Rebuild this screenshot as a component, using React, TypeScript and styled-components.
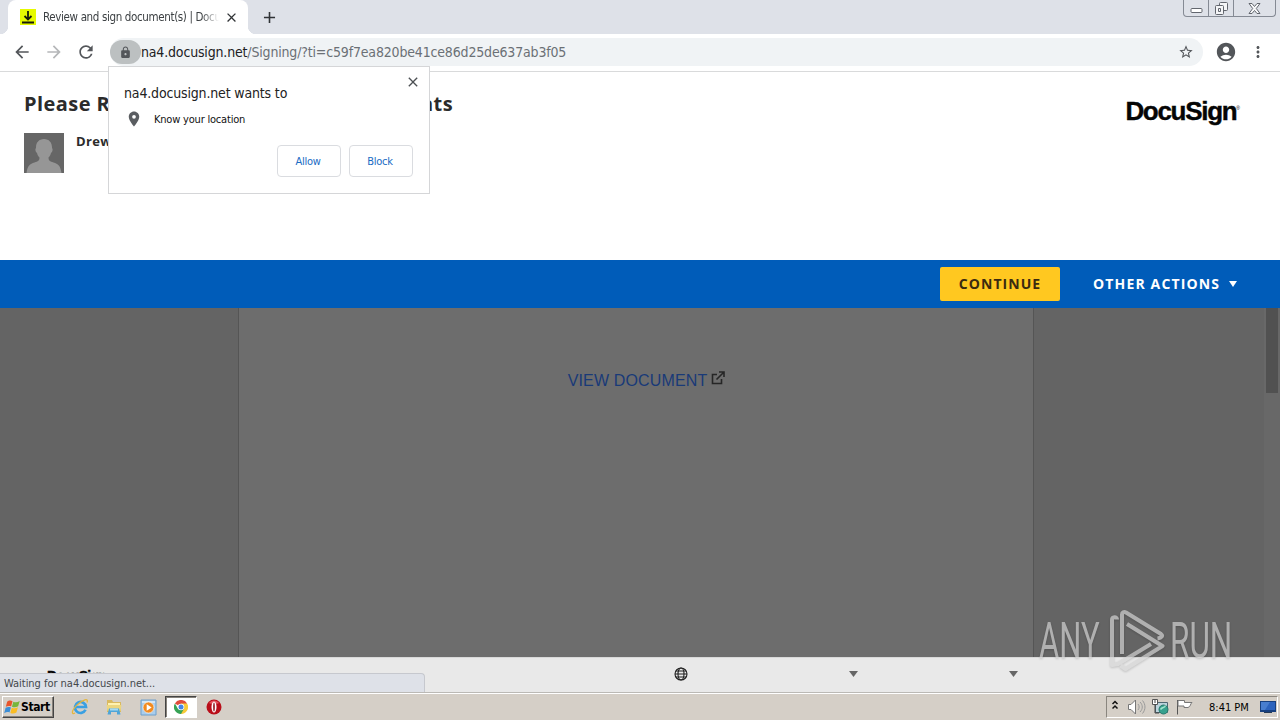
import React from "react";
import styled, { createGlobalStyle } from "styled-components";
import {
  MdAccountCircle,
  MdAdd,
  MdArrowBack,
  MdArrowForward,
  MdClose,
  MdLocationOn,
  MdLock,
  MdMoreVert,
  MdRefresh,
  MdStarBorder,
} from "react-icons/md";

const GlobalStyle = createGlobalStyle`
  * {
    box-sizing: border-box;
  }
  body {
    margin: 0;
    overflow: hidden;
  }
  svg {
    display: block;
    flex: none;
  }
`;

const tahoma = `"DejaVu Sans Condensed", "DejaVu Sans", sans-serif`;

const Screen = styled.div`
  position: relative;
  display: flex;
  flex-direction: column;
  width: 1280px;
  height: 720px;
  overflow: hidden;
  background: #fff;
  font-family: ${tahoma};
  white-space: nowrap;
`;

const Label = styled.span<{ $size: number; $spacing?: number; $color?: string }>`
  font-size: ${p => p.$size}px;
  letter-spacing: ${p => p.$spacing || 0}px;
  color: ${p => p.$color || "#222"};
`;

const TabStrip = styled.div`
  display: flex;
  height: 34px;
  flex: none;
  padding-left: 8px;
  background: #dee1e8;
`;

const Tab = styled.div`
  position: relative;
  display: flex;
  align-items: center;
  width: 240px;
  height: 34px;
  padding: 0 9px 0 12px;
  background: #fff;
  border-radius: 8px 8px 0 0;

  &::before,
  &::after {
    content: "";
    position: absolute;
    bottom: 0;
    width: 8px;
    height: 8px;
  }
  &::before {
    left: -8px;
    background: radial-gradient(circle at 0 0, transparent 8px, #fff 8.5px);
  }
  &::after {
    right: -8px;
    background: radial-gradient(circle at 100% 0, transparent 8px, #fff 8.5px);
  }
`;

const TabTitle = styled.div`
  width: 177px;
  margin: 0 5px 0 7px;
  overflow: hidden;
  line-height: 16px;
  padding-bottom: 1px;
  mask-image: linear-gradient(to right, #000 90%, transparent);
`;

const NewTab = styled.div`
  display: flex;
  align-items: center;
  margin-left: 12px;
`;

const WindowButtons = styled.div`
  display: flex;
  height: 17px;
  margin-left: auto;
  margin-right: 4px;
  border: 1px solid #858a94;
  border-top: 0;
  border-radius: 0 0 4px 4px;
`;

const WindowButton = styled.div<{ $width: number }>`
  display: flex;
  align-items: center;
  justify-content: center;
  width: ${p => p.$width}px;

  & + & {
    border-left: 1px solid #858a94;
  }
`;

const Toolbar = styled.div`
  display: flex;
  align-items: center;
  height: 38px;
  flex: none;
  padding: 0 13px 1px 12px;
  gap: 12px;
  border-bottom: 1px solid #d9dadb;
  color: #53565a;
`;

const AddressBar = styled.div`
  display: flex;
  align-items: center;
  width: 1094px;
  height: 28px;
  margin-left: 2px;
  padding-right: 9px;
  border-radius: 14px;
  background: #f0f3f5;
`;

const LockChip = styled.div`
  display: flex;
  align-items: center;
  justify-content: center;
  width: 31px;
  height: 24px;
  border-radius: 12px;
  background: #bcc0c1;
`;

const Url = styled.div`
  flex: 1;
  padding-bottom: 2px;
`;

const PageHeader = styled.header`
  display: flex;
  justify-content: space-between;
  height: 188px;
  flex: none;
  padding: 20px 40px 0 24px;
`;

const Title = styled.h1`
  margin: 0;
  color: #2b2b2b;
  font: bold 20px/24px "Open Sans", sans-serif;
  letter-spacing: 0.44px;
`;

const Sender = styled.div`
  display: flex;
  gap: 12px;
  margin-top: 17px;
  color: #2b2b2b;
  font: bold 13px/17px "Open Sans", sans-serif;
  letter-spacing: 0.35px;
`;

const Logo = styled.div<{ $size: number; $spacing: number }>`
  color: #050505;
  font-family: "Liberation Sans", Arial, sans-serif;
  font-weight: bold;
  font-size: ${p => p.$size}px;
  letter-spacing: ${p => p.$spacing}px;
  -webkit-text-stroke: 0.4px #050505;
`;

const HeaderLogo = styled.div`
  display: flex;
  height: 34px;
  margin-top: 4px;
  line-height: 30px;
`;

const Registered = styled.span`
  font: 5px/24px "Liberation Sans", sans-serif;
`;

const ActionBar = styled.div`
  display: flex;
  align-items: center;
  justify-content: flex-end;
  height: 48px;
  flex: none;
  padding-right: 43px;
  background: #005cb9;
  color: #fff;
  font: bold 14px "Open Sans", sans-serif;
`;

const ContinueButton = styled.button`
  width: 120px;
  height: 34px;
  margin-right: 33px;
  padding: 0 0 2px;
  border: 0;
  border-radius: 2px;
  background: #ffc820;
  color: #3b2b10;
  font: bold 14px "Open Sans", sans-serif;
  letter-spacing: 1.05px;
`;

const OtherActions = styled.div`
  display: flex;
  align-items: center;
  justify-content: space-between;
  width: 144px;
  padding-bottom: 1px;
  letter-spacing: 1.15px;
`;

const Viewer = styled.main`
  display: flex;
  justify-content: space-between;
  height: 349px;
  flex: none;
  padding-left: 238px;
  background: #646464;
`;

const Paper = styled.div`
  display: flex;
  justify-content: center;
  align-items: flex-start;
  gap: 4px;
  width: 796px;
  padding: 63px 0 0 21px;
  border: solid #555;
  border-width: 0 1px;
  background: #6d6d6d;
  color: #193a78;
  font: 16px/19px "Liberation Sans", Arial, sans-serif;
  letter-spacing: 0.14px;
`;

const Scrollbar = styled.div`
  width: 16px;
  padding: 0 2px;
  background: #686868;
`;

const ScrollThumb = styled.div`
  height: 85px;
  background: #515151;
`;

const PageFooter = styled.footer`
  position: relative;
  display: flex;
  height: 35px;
  flex: none;
  padding: 9px 262px 0 47px;
  background: #e9e9e9;
  border-top: 1px solid #d8d8d8;
`;

const FooterLogo = styled.div`
  padding-top: 1px;
`;

const FooterIcons = styled.div`
  display: flex;
  margin-left: auto;
`;

const GlobeSlot = styled.div`
  margin-right: 161px;
`;

const FooterCaret = styled.div`
  width: 9px;
  padding-top: 4px;

  & + & {
    margin-left: 151px;
  }
`;

const StatusBubble = styled.div`
  position: absolute;
  left: 0;
  bottom: 0;
  width: 425px;
  height: 19px;
  padding-left: 4px;
  border: 1px solid #c6c8ce;
  border-width: 1px 1px 0 0;
  border-radius: 0 4px 0 0;
  background: #dee1e8;
  line-height: 15px;
`;

const Taskbar = styled.div`
  display: flex;
  align-items: center;
  height: 28px;
  flex: none;
  padding: 2px 2px 1px;
  border-top: 1px solid #bbb9b5;
  box-shadow: inset 0 1px #fff;
  background: #d5cfc7;
`;

const StartButton = styled.div`
  display: flex;
  align-items: center;
  width: 52px;
  height: 22px;
  padding-left: 1px;
  border: 1px solid;
  border-color: #fff #444 #444 #fff;
  box-shadow: inset -1px -1px #87827b;
  color: #000;
  font: bold 12px ${tahoma};
  letter-spacing: -0.4px;
`;

const QuickLaunch = styled.div`
  display: flex;
  align-items: center;
  margin-left: 9px;
`;

const LaunchItem = styled.div<{ $active?: boolean }>`
  display: flex;
  align-items: center;
  justify-content: center;
  width: ${p => (p.$active ? 32 : 34)}px;
  height: 22px;
  border: 1px solid;
  border-color: ${p => (p.$active ? "#444 #fff #fff #444" : "transparent")};
  box-shadow: ${p => (p.$active ? "inset 1px 1px #87827b" : "none")};
  background: ${p => (p.$active ? "#fff" : "transparent")};
`;

const Tray = styled.div`
  display: flex;
  align-items: center;
  width: 172px;
  height: 22px;
  margin-left: auto;
  padding-left: 5px;
  border: 1px solid;
  border-color: #8a867f #fff #fff #8a867f;
`;

const Clock = styled.div`
  width: 51px;
  margin-left: 13px;
  font-size: 11px;
  letter-spacing: 0;
  color: #000;
`;

const Popup = styled.div`
  position: absolute;
  left: 108px;
  top: 66px;
  width: 322px;
  height: 128px;
  padding: 17px 16px 16px;
  border: 1px solid #d5d6d8;
  background: #fff;
`;

const PopupClose = styled.div`
  position: absolute;
  top: 7px;
  right: 8px;
  color: #4d5054;
`;

const PopupHeading = styled.div`
  height: 19px;
  margin-left: -1px;
  line-height: 18px;
`;

const Permission = styled.div`
  display: flex;
  align-items: center;
  gap: 11px;
  height: 18px;
  margin-top: 7px;
  color: #5a5d61;
`;

const PopupButtons = styled.div`
  display: flex;
  justify-content: flex-end;
  gap: 8px;
  margin-top: 17px;
`;

const PopupButton = styled.button`
  width: 64px;
  height: 32px;
  padding: 0 2px 0 0;
  border: 1px solid #dadce0;
  border-radius: 4px;
  background: #fff;
  color: #1a6bc4;
  font: 11px ${tahoma};
  letter-spacing: -0.25px;
`;

const Watermark = styled.div`
  position: absolute;
  left: 1039px;
  top: 608px;
  display: flex;
  align-items: center;
  height: 66px;
  color: #d5d5d5;
  opacity: 0.68;
  filter: drop-shadow(0 1px 1px rgba(0, 0, 0, 0.25));
`;

const WatermarkWord = styled.div<{ $width: number; $scale: number }>`
  width: ${p => p.$width}px;
  font: 400 50px/68px Roboto, sans-serif;

  span {
    display: inline-block;
    transform: scaleX(${p => p.$scale});
    transform-origin: left;
  }
`;

const DownloadMark = () => (
  <svg width="16" height="16" viewBox="0 0 16 16">
    <path fill="#e6fa00" d="M0 0h16v16H0z" />
    <path d="M8 2v8M4.500 7 8 10.500 11.500 7M2 13.500h12" fill="none" stroke="#171b0b" strokeWidth="1.800" />
  </svg>
);

const Avatar = () => (
  <svg width="40" height="40" viewBox="0 0 40 40">
    <path fill="#666" d="M0 0h40v40H0z" />
    <path
      fill="#969696"
      d="M20 6c5 0 8 3.500 8 8.500 0 1 1 1.500.5 3-.3 1.500-1 2-1.500 2.500-.5 2-1.500 3.500-2.500 4.500 0 3 1.500 4 5 5 4.500 1.300 7 3 8 10.500H2.500c1-7.500 3.500-9.200 8-10.500 3.500-1 5-2 5-5-1-1-2-2.500-2.500-4.500-.5-.5-1.200-1-1.500-2.500-.5-1.500.5-2 .5-3C12 9.500 15 6 20 6Z"
    />
  </svg>
);

const Caret = ({ color, width, height }: { color: string; width: number; height: number }) => (
  <svg width={width} height={height} viewBox="0 0 10 6" preserveAspectRatio="none">
    <path fill={color} d="M0 0h10L5 6z" />
  </svg>
);

const OpenIcon = () => (
  <svg width="14" height="14" viewBox="0 0 14 14" fill="none" stroke="#262626" strokeWidth="1.600">
    <path d="M6 3.500H1.500v9h9V8M8 1h5v5M13 1 5.500 8.500" />
  </svg>
);

const Globe = () => (
  <svg width="14" height="14" viewBox="0 0 14 14" fill="none" stroke="#202020" strokeWidth="1.100">
    <circle cx="7" cy="7" r="6" />
    <ellipse cx="7" cy="7" rx="3" ry="6" />
    <path d="M1 7h12M2 4h10M2 10h10" />
  </svg>
);

const StartFlag = () => (
  <svg width="17" height="17" viewBox="0 0 16 16">
    <path fill="#e8552b" d="M3 2.500C5 1 6.500 1.300 8 2L6.700 7C5 6.200 3.500 6.500 1.700 7.300z" />
    <path fill="#77b63c" d="M8.800 2.500c2 .9 3.800.6 6-.6l-1.500 5c-2 1-3.800 1.300-5.800.4z" />
    <path fill="#3c8ed6" d="M1.500 8.200c1.800-.9 3.300-1 5-.3L5.200 12.800c-1.600-.8-3.200-.5-5 .5z" />
    <path fill="#fabd24" d="M7.300 8.200c2 .9 3.800.6 5.800-.4l-1.400 5c-2 1-3.700 1.200-5.700.3z" />
  </svg>
);

const ExplorerIcon = () => (
  <svg width="18" height="18" viewBox="0 0 18 18" fill="none">
    <path d="M14.500 11.800A5.500 5.500 0 1 1 15 9H5" stroke="#3aa0e2" strokeWidth="2.700" />
    <path d="M4 15c-2 1-3 .6-2.500-1.500C2.300 10 9 3.200 14 1.800c2.200-.6 2.800.7 2 2.700" stroke="#e5b63c" strokeWidth="1.300" />
  </svg>
);

const FolderIcon = () => (
  <svg width="18" height="18" viewBox="0 0 18 18">
    <path fill="#d9b95f" d="M2 2h5l1 2h8v10H2z" />
    <path fill="#fff2b0" d="M3 5h12v8H3z" />
    <path fill="#ecd67f" d="M1.500 7h15l-1 6h-13z" />
    <path fill="#4fa5d8" d="M4 10.500h10l1.500 6H12V14H6v2.500H2.500z" />
    <path fill="#a6dbf3" d="M5 10.500h8v2H5z" />
  </svg>
);

const PlayerIcon = () => (
  <svg width="17" height="17" viewBox="0 0 17 17">
    <path fill="#a9cdec" stroke="#6f9fca" d="M1 1h15v15H1z" />
    <path fill="#d3e6f6" d="M2 2h13v2H2z" />
    <circle cx="8.500" cy="8.500" r="5.500" fill="#f18a20" stroke="#fff" strokeWidth=".6" />
    <path fill="#fff" d="m6.700 5.200 5 3.300-5 3.300z" />
  </svg>
);

const ChromeIcon = () => (
  <svg width="14" height="14" viewBox="0 0 14 14">
    <path fill="#e04b3b" d="M7 7 .9 3.500A7 7 0 0 1 13.100 3.500z" />
    <path fill="#f7ca38" d="M7 7V3.500h6.100A7 7 0 0 1 7 14z" />
    <path fill="#36a255" d="M.9 3.500 4 8.700 7 10v4A7 7 0 0 1 .9 3.500z" />
    <path fill="#36a255" d="m7 14 3-5.200-4 .8z" />
    <circle cx="7" cy="7" r="3.300" fill="#fff" />
    <circle cx="7" cy="7" r="2.500" fill="#4385e6" />
  </svg>
);

const OperaIcon = () => (
  <svg width="16" height="16" viewBox="0 0 16 16">
    <circle cx="8" cy="8" r="7.500" fill="#b90e19" />
    <path fill="#e4525b" d="M3 4c2.500-3.500 7.500-3.500 10 0-2 1.500-8 1.500-10 0z" />
    <ellipse cx="8" cy="8" rx="2.500" ry="5.500" fill="#fff" />
    <ellipse cx="8" cy="8" rx=".8" ry="4.600" fill="#8d0b13" />
  </svg>
);

const TrayIcons = () => (
  <svg width="84" height="18" viewBox="0 0 84 18" fill="none">
    <path d="m.5 6 2.500-2.500L5.500 6M.5 10.500 3 8l2.500 2.500" stroke="#111" strokeWidth="1.500" />
    <path d="M16.500 6.500H19L23.500 2v14L19 11.500h-2.500z" fill="#fff" stroke="#777" />
    <path d="M26 6c1.500 2 1.500 4 0 6M28 4c3 3 3 7 0 10M30.500 2.500c3.300 4 3.300 9 0 13" stroke="#9a9a9a" />
    <path d="M43.500 4.500h12v10h-12z" fill="#bcd3dc" stroke="#4d6672" />
    <path d="M40.500 1.500h5v5h-5z" fill="#fff" stroke="#555" />
    <path d="M43 2v3M43 6v9h4" stroke="#444" />
    <circle cx="51.500" cy="11.500" r="4.500" fill="#36a18e" stroke="#27796d" />
    <path d="M48.500 11.500c2-3 4-1 5-4" stroke="#a1e3cd" strokeWidth="1.400" />
    <path d="M65.500 2v14.500" stroke="#555" />
    <path d="M66 2.500h6.500v2H80c-2 1.500-1 4-4 5h-4v-1.500h-6z" fill="#fff" stroke="#777" />
  </svg>
);

const DesktopIcon = () => (
  <svg width="16" height="14" viewBox="0 0 16 14">
    <path fill="#17407f" d="M0 1h16v11H0z" />
    <path fill="#2c63bd" d="M1 2h14v8H1z" />
    <path fill="#6ba0e4" d="m1 2h9L5 10H1z" opacity=".45" />
    <path fill="#263a55" d="M4 12h8v1H4z" />
  </svg>
);

const AnyRunMark = () => (
  <svg width="60" height="66" viewBox="0 0 60 66" fill="none" stroke="currentColor" strokeWidth="4" strokeLinejoin="round">
    <path d="M7 11.500C7 8.500 2 8.500 2 12v45l6-1L41 36" />
    <path d="M12 46V6.500c0-2 2-3 4-2L51 26c2 1.500 1 4-3.500 4.500" />
    <path d="M17 16 52.500 38 15.500 61l-5-3.500" />
  </svg>
);

const App: React.FC = () => (
  <>
    <GlobalStyle />
    <Screen>
      <TabStrip>
        <Tab>
          <DownloadMark />
          <TabTitle>
            <Label $size={11.5} $spacing={-0.36} $color="#3c4043">
              Review and sign document(s) | Docu
            </Label>
          </TabTitle>
          <MdClose size={15} color="#303336" />
        </Tab>
        <NewTab>
          <MdAdd size={19} color="#303336" />
        </NewTab>
        <WindowButtons>
          <WindowButton $width={24}>
            <svg width="13" height="9" viewBox="0 0 13 9">
              <rect x="1" y="4.500" width="11" height="4" rx="1" fill="#fff" stroke="#62666e" />
            </svg>
          </WindowButton>
          <WindowButton $width={25}>
            <svg width="13" height="13" viewBox="0 0 13 13" fill="#f4f5f7" stroke="#62666e">
              <rect x="4.500" y=".5" width="8" height="8" rx="1" />
              <rect x=".5" y="3.500" width="8" height="9" rx="1" />
              <path d="M3.500 6.500h2v3h-2z" />
            </svg>
          </WindowButton>
          <WindowButton $width={42}>
            <svg width="13" height="11" viewBox="0 0 13 11">
              <path d="M1 .5h3l2.500 3 2.500-3h3L8.300 5.500l3.700 5H9l-2.500-3-2.500 3H1l3.700-5z" fill="#f8f8fa" stroke="#62666e" />
            </svg>
          </WindowButton>
        </WindowButtons>
      </TabStrip>

      <Toolbar>
        <MdArrowBack size={20} />
        <MdArrowForward size={20} color="#b5b7b9" />
        <MdRefresh size={20} />
        <AddressBar>
          <LockChip>
            <MdLock size={13} />
          </LockChip>
          <Url>
            <Label $size={14} $spacing={-0.17} $color="#202124">na4.docusign.net</Label>
            <Label $size={14} $spacing={-0.17} $color="#6b7075">
              /Signing/?ti=c59f7ea820be41ce86d25de637ab3f05
            </Label>
          </Url>
          <MdStarBorder size={16} />
        </AddressBar>
        <MdAccountCircle size={22} />
        <MdMoreVert size={18} />
      </Toolbar>

      <PageHeader>
        <div>
          <Title>Please Review &amp; Act on These Documents</Title>
          <Sender>
            <Avatar />
            Drew
          </Sender>
        </div>
        <HeaderLogo>
          <Logo $size={26} $spacing={-1.3}>DocuSign</Logo>
          <Registered>®</Registered>
        </HeaderLogo>
      </PageHeader>

      <ActionBar>
        <ContinueButton>CONTINUE</ContinueButton>
        <OtherActions>
          OTHER ACTIONS
          <Caret color="#fff" width={8} height={6} />
        </OtherActions>
      </ActionBar>

      <Viewer>
        <Paper>
          VIEW DOCUMENT
          <OpenIcon />
        </Paper>
        <Scrollbar>
          <ScrollThumb />
        </Scrollbar>
      </Viewer>

      <PageFooter>
        <FooterLogo>
          <Logo $size={14} $spacing={-0.8}>DocuSign</Logo>
        </FooterLogo>
        <FooterIcons>
          <GlobeSlot>
            <Globe />
          </GlobeSlot>
          <FooterCaret>
            <Caret color="#666" width={9} height={6} />
          </FooterCaret>
          <FooterCaret>
            <Caret color="#666" width={9} height={6} />
          </FooterCaret>
        </FooterIcons>
        <StatusBubble>
          <Label $size={11} $spacing={-0.03} $color="#44474b">Waiting for na4.docusign.net...</Label>
        </StatusBubble>
      </PageFooter>

      <Taskbar>
        <StartButton>
          <StartFlag />
          Start
        </StartButton>
        <QuickLaunch>
          <LaunchItem><ExplorerIcon /></LaunchItem>
          <LaunchItem><FolderIcon /></LaunchItem>
          <LaunchItem><PlayerIcon /></LaunchItem>
          <LaunchItem $active><ChromeIcon /></LaunchItem>
          <LaunchItem><OperaIcon /></LaunchItem>
        </QuickLaunch>
        <Tray>
          <TrayIcons />
          <Clock>8:41 PM</Clock>
          <DesktopIcon />
        </Tray>
      </Taskbar>

      <Popup>
        <PopupClose>
          <MdClose size={16} />
        </PopupClose>
        <PopupHeading>
          <Label $size={14} $spacing={-0.16}>na4.docusign.net wants to</Label>
        </PopupHeading>
        <Permission>
          <MdLocationOn size={18} />
          <Label $size={11} $spacing={-0.2} $color="#111">Know your location</Label>
        </Permission>
        <PopupButtons>
          <PopupButton>Allow</PopupButton>
          <PopupButton>Block</PopupButton>
        </PopupButtons>
      </Popup>

      <Watermark>
        <WatermarkWord $width={71} $scale={0.62}><span>ANY</span></WatermarkWord>
        <AnyRunMark />
        <WatermarkWord $width={66} $scale={0.63}><span>RUN</span></WatermarkWord>
      </Watermark>
    </Screen>
  </>
);

export default App;
